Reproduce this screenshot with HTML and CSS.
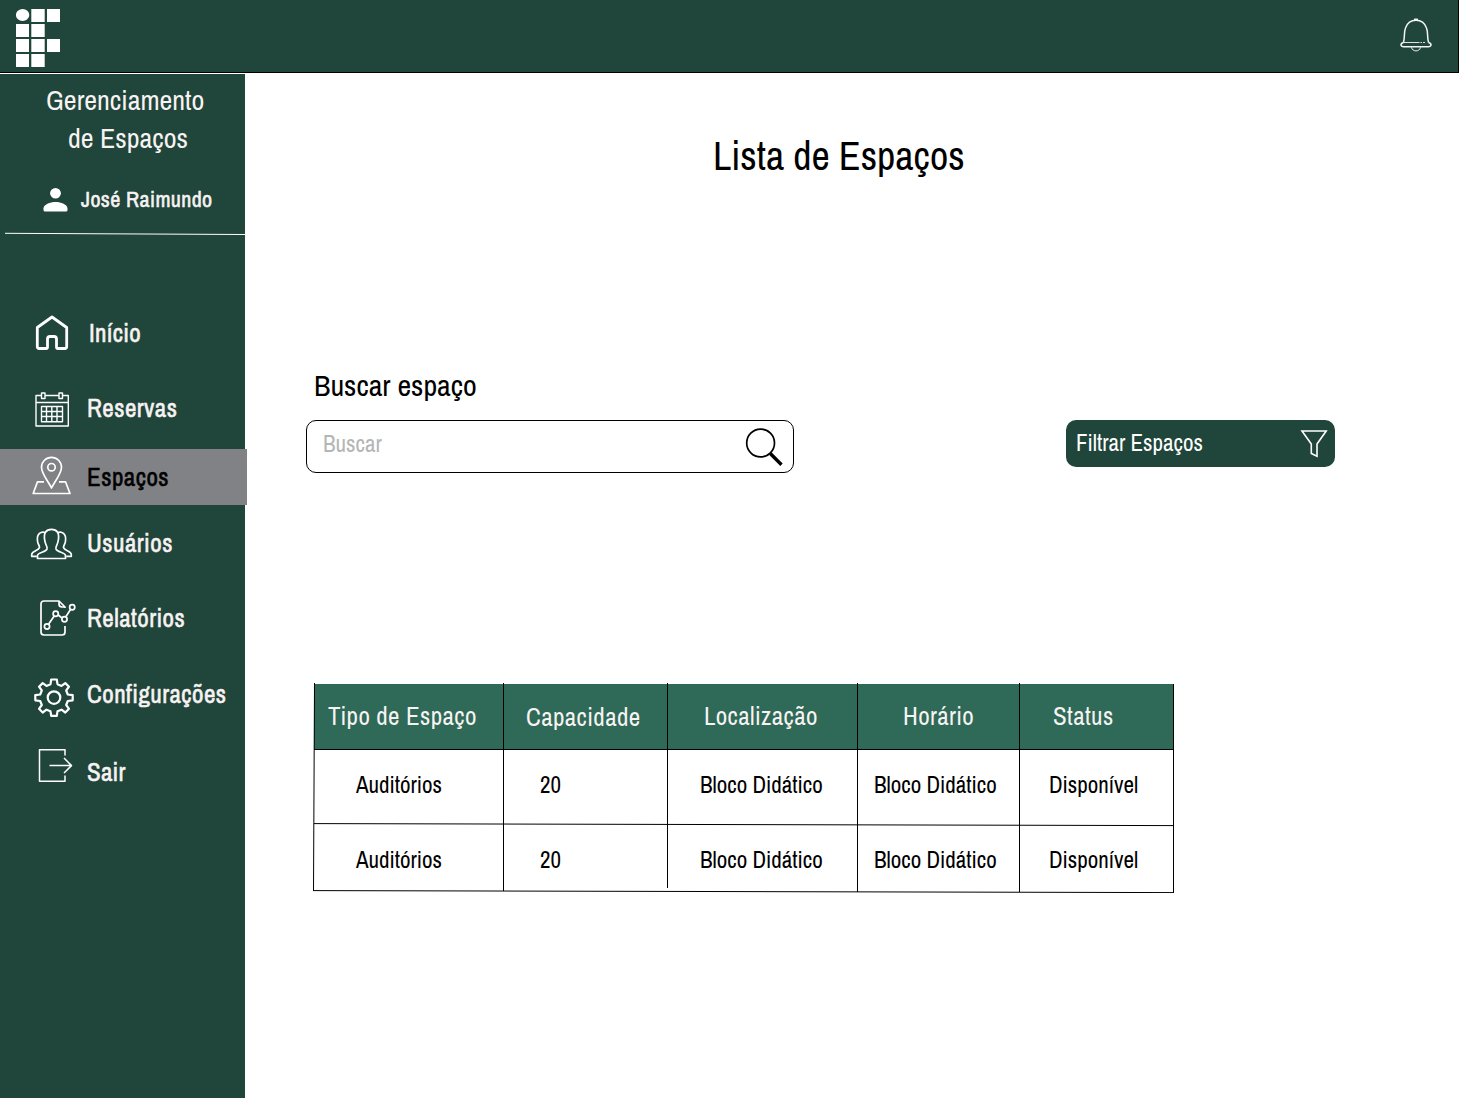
FILE: index.html
```html
<!DOCTYPE html>
<html lang="pt-BR">
<head>
<meta charset="utf-8">
<title>Lista de Espaços</title>
<link rel="stylesheet" href="styles.css">
</head>
<body>
<header class="topbar">
  <svg class="logo" width="44" height="58" viewBox="16 9 44 58" fill="#fff">
    <ellipse cx="22.6" cy="15" rx="6.7" ry="6"/>
    <path d="M31.3 9h13.4v13H31.3zM47 9h13v13H47zM16 24h13v13H16zM31.3 24h13.4v13H31.3zM16 39h13v13H16zM31.3 39h13.4v13H31.3zM47 39h13v13H47zM16 54h13v13H16zM31.3 54h13.4v13H31.3z"/>
  </svg>
  <svg class="bell" width="34" height="36" viewBox="1399 17 34 36" fill="none" stroke="#f2f5f4" stroke-width="1.5">
    <path d="M1403.5 42.5C1405 37 1403.8 32 1405.5 28C1407.3 23 1411 20.3 1416 20.3S1424.7 23 1426.5 28C1428.2 32 1427 37 1428.5 42.5"/>
    <path d="M1414 19.3h4" stroke-width="1.5"/>
    <path d="M1403.5 42.5h16M1420.5 42.5h1.5M1423 42.5h2" stroke-width=".9"/>
    <path d="M1403.500 42.500c-3.600 1-3.200 4.200.3 4.200h24.400c3.500 0 3.900-3.200.3-4.200"/>
    <path d="M1411.5 47.300c.8 4.800 8.200 4.800 9 0" stroke-width="1"/>
  </svg>
</header>
<div class="layout">
  <aside class="sidebar">
    <h2 class="brand"><span>Gerenciamento</span><span class="brand-second">de Espaços</span></h2>
    <div class="user">
      <svg width="25" height="24" viewBox="-.5 0 25 24" fill="#fff"><ellipse cx="12" cy="5.3" rx="5.4" ry="5.3"/><path d="M0 20.5C0 16.500 6.500 14 12 14s12 2.500 12 6.500V22q0 1.500-1.500 1.500h-21Q0 23.500 0 22z"/></svg>
      <span>José Raimundo</span>
    </div>
    <svg class="rule" width="245" height="4" viewBox="0 231 245 4" stroke="#fff"><path d="M5 233.300L245 234.500"/></svg>
    <nav class="menu">
      <a class="item home"><svg viewBox="0 305 87 56" stroke-width="2.800"><path d="M52 317L66.700 327.500V346.500Q66.700 348.500 64.700 348.500H58Q56.500 348.500 56.500 347V339Q56.500 336.500 54 336.500H50Q47.500 336.500 47.500 339V347Q47.500 348.500 46 348.500H39.300Q37.300 348.500 37.300 346.500V327.500Z"/></svg><span>Início</span></a>
      <a class="item bookings"><svg viewBox="0 380 87 56" stroke-width="1.400"><path d="M41.500 395.500H36V426H68.300V395.500H62.500M58.500 395.500H45.500M36 402.500H68.300M41.500 393h3.500v5.500h-3.500zM59 393h3.500v5.500H59zM41.500 406.500h21v15.300h-21zM46.500 406.500v15.300M51.800 406.500v15.300M57 406.500v15.300M41.500 411.500h21M41.500 416.500h21"/></svg><span>Reservas</span></a>
      <a class="item active spaces"><svg viewBox="0 449 87 56" stroke-width="1.700"><path d="M51.500 488C49 482.500 41.500 474 41.500 467.300a10 10 0 0 1 20 0C61.500 474 54 482.500 51.500 488Z"/><circle cx="51.500" cy="467.200" r="3.700"/><path d="M44 481.800H37.500L33.200 493.500H70L65.500 481.800H59"/></svg><span>Espaços</span></a>
      <a class="item users"><svg viewBox="0 515 87 56" stroke-width="1.700"><path d="M37.500 558.500V555.500C37.500 552 46 552.500 47 549C47.600 546 45.500 545 45 541.500C43 533 46 529.300 51.500 529.300S60 533 58 541.500C57.500 545 55.400 546 56 549C57 552.500 65.500 552 65.500 555.500V558.500ZM36.500 556.300H31.700V554.500C32 550.500 38.500 551 39.500 547.500C39.500 545 37.800 544.500 37.500 541C36.500 534 41 530.500 46 533M66.500 556.300H71.300V554.500C71 550.500 64.500 551 63.500 547.500C63.500 545 65.200 544.500 65.500 541C66.500 534 62 530.500 57 533"/></svg><span>Usuários</span></a>
      <a class="item reports"><svg viewBox="0 590 87 56" stroke-width="1.700"><path d="M65 608V607L59 601H44Q41 601 41 604V632Q41 635 44 635H62Q65 635 65 632V626M59 601V604Q59 607 62 607H65M48.700 624L54.200 616M58.200 615L62 618M66 616.500L70.500 609.500"/><circle cx="47" cy="626.500" r="2.600"/><circle cx="55.700" cy="613.700" r="2.600"/><circle cx="64.500" cy="619.300" r="2.600"/><circle cx="72.200" cy="607.300" r="2.600"/></svg><span>Relatórios</span></a>
      <a class="item settings"><svg viewBox="0 666 87 56" stroke-width="2.200"><path d="M51.200 679.500H56.800L57.500 684.200L61.500 685.900L65.300 683.100L69 686.700L66.200 690.500L67.800 694.500L72.700 695.200V700.300L67.800 701L66.200 705L69 708.800L65.300 712.500L61.500 709.700L57.500 711.300L56.800 715.800H51.200L50.500 711.300L46.500 709.700L42.700 712.500L39 708.800L41.800 705L40.200 701L35.300 700.300V695.200L40.200 694.500L41.800 690.500L39 686.700L42.700 683.100L46.500 685.900L50.500 684.200Z"/><circle cx="54" cy="697.600" r="6.300"/></svg><span>Configurações</span></a>
      <a class="item logout"><svg viewBox="0 744 87 56" stroke-width="1.500"><path d="M65 755.500V749.700H39.500V781.300H65V775.500M49.500 765.600H71.300M64 758L71.500 765.600L64 773"/></svg><span>Sair</span></a>
    </nav>
  </aside>
  <main class="content">
    <h1>Lista de Espaços</h1>
    <div class="tools">
      <div class="search">
        <label for="q">Buscar espaço</label>
        <div class="field">
          <input id="q" type="text" placeholder="Buscar">
          <svg width="40" height="40" viewBox="744 427 40 40" fill="none" stroke="#000"><circle cx="760.600" cy="443" r="13.900" stroke-width="1.700"/><path d="M770.300 453.500L781.500 464.700" stroke-width="3.400"/></svg>
        </div>
      </div>
      <button class="filter"><span>Filtrar Espaços</span><svg width="28" height="30" viewBox="1300 429 28 30" fill="none" stroke="#fff" stroke-width="1.600"><path d="M1302 431H1326.200L1317 444V456.300L1311.300 453.500V444Z"/></svg></button>
    </div>
    <div class="table">
      <div class="row head"><span>Tipo de Espaço</span><span>Capacidade</span><span>Localização</span><span>Horário</span><span>Status</span></div>
      <div class="row"><span>Auditórios</span><span>20</span><span>Bloco Didático</span><span>Bloco Didático</span><span>Disponível</span></div>
      <div class="row"><span>Auditórios</span><span>20</span><span>Bloco Didático</span><span>Bloco Didático</span><span>Disponível</span></div>
      <svg class="lines" width="861" height="210" viewBox="313 683 861 210" stroke="#000"><path d="M314.500 683L313.500 891M503.500 683V891M667.500 683V888M857.500 683V892M1019.500 683V892M1173.500 684V893M314 749.500H1174M314 823.600L1174 825.600M313 890.600L1174 892.600"/></svg>
    </div>
  </main>
</div>
</body>
</html>
```
FILE: styles.css
```css
* { box-sizing: border-box; }
body { margin: 0; background: #fff; color: #000; font-family: "Archivo Narrow", "Liberation Sans Narrow", "Liberation Sans", sans-serif; white-space: nowrap; overflow: hidden; }
svg { display: block; flex: none; }
h1, h2 { margin: 0; font-weight: 400; }
.topbar { height: 73px; background: #20453a; border-bottom: 1px solid #000; border-right: 1px solid #000; display: flex; justify-content: space-between; padding: 9px 25px 0 16px; }
.bell { margin-top: 8px; }
.layout { display: flex; height: 1024px; margin-top: 1px; }
.sidebar { width: 245px; flex: none; background: #20453a; color: #f8f3f3; }
.brand { font-size: 28px; line-height: 38px; padding: 7px 0 0 46px; height: 84px; }
.brand span { display: block; }
.brand .brand-second { padding-left: 22px; }
.user { display: flex; height: 56px; align-items: center; margin: 14px 0 3px; padding-left: 43px; gap: 13px; font-size: 22px; letter-spacing: .4px; -webkit-text-stroke: .5px; }
.user span { padding-bottom: 2px; }
.rule { height: 4px; }
.menu { padding-top: 70px; display: flex; flex-direction: column; }
.item { display: flex; align-items: center; height: 56px; width: 247px; flex: none; font-size: 25px; line-height: 30px; letter-spacing: .48px; -webkit-text-stroke: .5px; }
.item svg { width: 87px; height: 56px; fill: none; stroke: #fff; stroke-linejoin: round; }
.home span { padding-left: 2px; letter-spacing: .3px; }
.bookings { margin-top: 19px; }
.spaces { margin-top: 13px; }
.bookings span, .spaces span { padding-bottom: 1px; }
.users { margin-top: 10px; }
.reports { margin-top: 19px; }
.settings { margin-top: 20px; }
.logout { margin-top: 22px; }
.logout span { letter-spacing: .2px; }
.active { background: #808285; color: #000; }
.content { flex: 1; padding: 55px 0 0 61px; }
h1 { font-size: 40px; line-height: 54px; padding-left: 407px; }
.tools { display: flex; margin-top: 183px; }
.search { width: 488px; }
.search label { display: block; font-size: 30px; line-height: 38px; height: 54px; padding-left: 8px; }
.field { height: 53px; border: 1px solid #000; border-radius: 10px; display: flex; align-items: flex-start; padding: 6px 9px 0 16px; }
.field input { flex: 1; border: 0; outline: 0; padding: 0; height: 33px; font: 23px "Archivo Narrow", "Liberation Sans Narrow", "Liberation Sans", sans-serif; background: none; }
.field input::placeholder { color: #b5b5b5; opacity: 1; }
.filter { width: 269px; height: 47px; margin: 54px 0 0 272px; border: 0; border-radius: 10px; background: #20453a; color: #fff; display: flex; justify-content: space-between; align-items: center; padding: 0 7px 0 10px; font: 23px "Archivo Narrow", "Liberation Sans Narrow", "Liberation Sans", sans-serif; }
.filter span { padding-bottom: 2px; }
.table { position: relative; width: 861px; margin: 210px 0 0 7px; padding-top: 1px; }
.row { display: grid; grid-template-columns: 190px 164px 190px 162px 154px; height: 75px; line-height: 72px; font-size: 23px; margin-left: 1px; width: 860px; }
.row.head { height: 65px; line-height: 65px; background: #2e6a57; color: #f8f3f3; font-size: 25px; letter-spacing: .4px; }
.row span:nth-child(1) { padding-left: 42px; }
.row span:nth-child(2) { padding-left: 36px; }
.row span:nth-child(3) { padding-left: 32px; }
.row span:nth-child(4) { padding-left: 16px; }
.row span:nth-child(5) { padding-left: 29px; }
.row.head span:nth-child(1) { padding-left: 14px; }
.row.head span:nth-child(2) { padding: 1px 0 0 22px; }
.row.head span:nth-child(3) { padding-left: 36px; }
.row.head span:nth-child(4) { padding-left: 45px; }
.row.head span:nth-child(5) { padding-left: 33px; }
.lines { position: absolute; left: 0; top: 0; }
```
